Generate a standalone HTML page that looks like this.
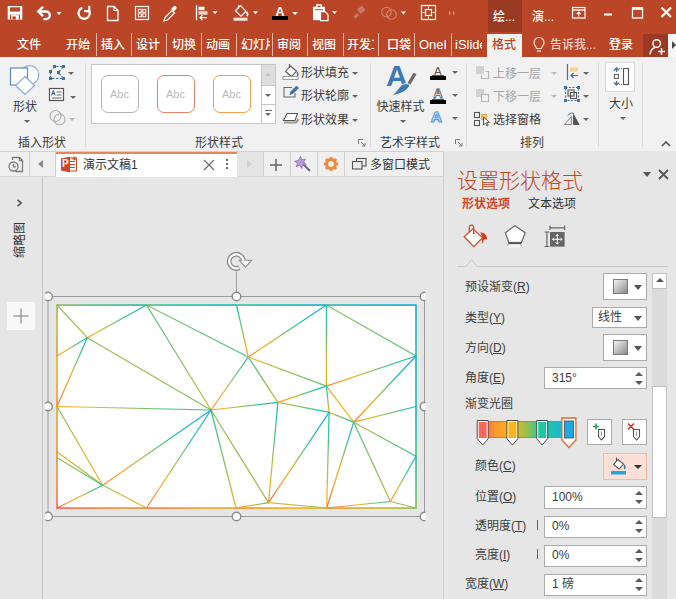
<!DOCTYPE html>
<html lang="zh-CN">
<head>
<meta charset="utf-8">
<title>演示文稿1 - PowerPoint</title>
<style>
*{box-sizing:border-box;margin:0;padding:0}
html,body{width:676px;height:599px;overflow:hidden;background:#e6e6e6}
body{position:relative;font-family:"Liberation Sans","Noto Sans CJK SC",sans-serif;font-size:12px;color:#444;line-height:16px}
.a{position:absolute}
.t{position:absolute;white-space:nowrap;line-height:16px;height:16px}
svg{position:absolute;overflow:visible}
#title{left:0;top:0;width:676px;height:33px;background:#ba4627}
#tabs{left:0;top:32px;width:676px;height:25px;background:#ba4627}
#tabs .t{color:#fff;font-size:12px;top:5px;font-weight:500}
#tabs .s{position:absolute;top:1px;width:1px;height:23px;background:#e9b5a6}
#ribbon{left:0;top:57px;width:676px;height:95px;background:#f1f1f1;border-bottom:1px solid #d2d2d2}
#ribbon .gs{position:absolute;top:6px;width:1px;height:84px;background:#dcdcdc}
#ribbon .gl{color:#606060;top:77.5px}
#ribbon .t{color:#3b3b3b}
#ribbon .dis{color:#a6a6a6}
.dd{position:absolute;width:0;height:0;border-left:3px solid transparent;border-right:3px solid transparent;border-top:3px solid #666}
.ddw{position:absolute;width:0;height:0;border-left:3px solid transparent;border-right:3px solid transparent;border-top:3px solid #fff}
#docbar{left:0;top:152px;width:443px;height:25px;background:#f0f0f0;border-bottom:1px solid #d4d4d4}
#docbar .s{position:absolute;top:0;width:1px;height:24px;background:#d2d2d2}
#left{left:0;top:177px;width:43px;height:422px;background:#e6e6e6;border-right:1px solid #c3c3c3}
#panel{left:443px;top:151px;width:233px;height:448px;background:#e6e6e6;border-left:1px solid #cfcfcf}
#panel .t{color:#3d3d3d}
.box{position:absolute;background:#fff;border:1px solid #ababab}
.spu{position:absolute;width:0;height:0;border-left:4px solid transparent;border-right:4px solid transparent;border-bottom:4.5px solid #5a5a5a;margin-left:-0.5px}
.spd{position:absolute;width:0;height:0;border-left:4px solid transparent;border-right:4px solid transparent;border-top:4.5px solid #5a5a5a;margin-left:-0.5px}
u{text-decoration:underline;text-underline-offset:1px}
</style>
</head>
<body>
<!--TITLE-->
<div id="title" class="a">
<div class="a" style="left:488px;top:0;width:34px;height:33px;background:#9b3a22"></div>
<svg width="676" height="33" viewBox="0 0 676 33" style="left:0;top:0" fill="none" stroke="#fff" stroke-width="1.3">
<!-- save -->
<rect x="7.700" y="6" width="14.600" height="13.600" fill="#fff" stroke="none"/><rect x="10" y="7.300" width="10" height="4.300" fill="#ba4627" stroke="none"/><rect x="10" y="14.600" width="10" height="5" fill="#ba4627" stroke="none"/><rect x="11.200" y="14.600" width="7.600" height="5" fill="#fff" stroke="none"/><rect x="12.400" y="16.400" width="3.400" height="3.200" fill="#ba4627" stroke="none"/>
<!-- undo -->
<path d="M39.500 11.500h6.500a3.800 3.800 0 0 1 0 7.600h-2.500" stroke-width="2.400"/><path d="M43 6.800l-4.700 4.700 4.700 4.700" stroke-width="2.400"/>
<path d="M56.500 12l2.500 3 2.500-3z" fill="#fff" stroke="none"/>
<!-- redo (repeat) -->
<path d="M89.300 11A5.600 5.600 0 1 1 82.300 7.900" stroke-width="2.200"/><path d="M89.300 5.800V11.200H84.200" stroke-width="2.200"/>
<!-- new doc -->
<path d="M107.500 6.500h6.500l4 4v10h-10.500z" stroke-width="1.300"/><path d="M114 6.500v4h4" stroke-width="1.100"/>
<!-- grid -->
<rect x="135.500" y="6.500" width="13" height="13" stroke-width="1.200"/><rect x="138.300" y="9.300" width="3" height="3" stroke-width="1"/><rect x="142.800" y="9.300" width="3" height="3" stroke-width="1"/><rect x="138.300" y="13.800" width="3" height="3" stroke-width="1"/><rect x="142.800" y="13.800" width="3" height="3" stroke-width="1"/>
<!-- eyedropper -->
<path d="M164 21l1-3.500 7-7 2.500 2.500-7 7z" stroke-width="1.200"/><path d="M171 9l2.500-2.500a1.800 1.800 0 0 1 2.600 2.600l-2.500 2.500z" fill="#fff" stroke="none"/>
<g transform="translate(0,-0.8)">
<!-- align -->
<path d="M196.500 6v15" stroke-width="1.300"/><rect x="198.500" y="7.500" width="6" height="3.500" fill="#fff" stroke="none"/><rect x="198.500" y="12" width="9" height="3.500" fill="#f3d6cd" stroke="none"/><path d="M207 18.500h-7m2.500-2.500l-2.500 2.500 2.500 2.500" stroke-width="1.200"/>
<path d="M212.500 12l2.500 3 2.500-3z" fill="#fff" stroke="none"/>
<!-- fill bucket -->
<path d="M235.500 11.500l5-5 5.500 5.500-5 5z" stroke-width="1.200"/><path d="M238.500 9.500v-3.500" stroke-width="1.200"/><path d="M246.500 12.500c1.500 2 1.500 3.500 0.500 4.500" stroke-width="1.500"/><rect x="233.500" y="18.500" width="14" height="3" fill="#f6e6da" stroke="none"/>
<path d="M253 12l2.500 3 2.500-3z" fill="#fff" stroke="none"/>
<!-- paste -->
<rect x="313" y="7.500" width="12" height="13.500" fill="#fff" stroke="none"/><rect x="316" y="5" width="6" height="4" fill="#fff" stroke="none"/><rect x="317.500" y="6.500" width="3" height="1.500" fill="#ba4627" stroke="none"/><path d="M315 10.500h8" stroke="#ba4627" stroke-width="1"/><path d="M320.500 12.500h4.500l3 3v6h-7.500z" fill="#ba4627" stroke="#fff" stroke-width="1.200"/>
<path d="M332 12l2.500 3 2.500-3z" fill="#fff" stroke="none"/>
</g>
<!-- format painter (dim) -->
<g stroke="#c77a66" fill="#c77a66"><path d="M357 9.500l5-4 3.500 4.500-5 4z" stroke="none"/><path d="M358 14.500l-3.500 3" stroke-width="3"/></g>
<!-- combine shapes (dim) -->
<circle cx="386.500" cy="12" r="4.800" stroke="#cf8a78" stroke-width="1.100"/><circle cx="391.500" cy="14.500" r="4.800" stroke="#cf8a78" stroke-width="1.100"/>
<path d="M401 11.500l2.500 3 2.500-3z" fill="#fff" stroke="none"/>
<!-- fit -->
<rect x="421.500" y="5.500" width="14" height="14" stroke-width="1.200"/><rect x="425.500" y="9.500" width="6" height="6" stroke-width="1.200"/><path d="M428.500 6.500v2m0 8v2m-6-6h2m8 0h2" stroke-width="1"/>
<!-- chevrons dim -->
<path d="M449 10.500l2 2.500-2 2.500zM453 10.500l2 2.500-2 2.500z" fill="#cf8a78" stroke="none"/>
<!-- ribbon display -->
<rect x="572.500" y="7.500" width="12.500" height="10.500" stroke-width="1.200"/><path d="M572.500 10h12.500" stroke-width="1.400"/><path d="M578.700 16.500v-4.500m-2 2l2-2 2 2" stroke-width="1.100"/>
<!-- minimize -->
<path d="M604 14.500h8" stroke-width="2"/>
<!-- maximize -->
<rect x="632.500" y="8" width="10" height="10" stroke-width="1.300"/><path d="M632 8.500h11" stroke-width="2.600"/>
<!-- close -->
<path d="M661.500 7.500l9.500 9.500m0-9.500l-9.500 9.500" stroke-width="2.200"/>
</svg>
<!-- font color A -->
<div class="t" style="left:275.500px;top:3.500px;color:#fff;font-weight:bold;font-size:12.500px">A</div>
<div class="a" style="left:272px;top:16px;width:16px;height:4px;background:#000"></div>
<div class="ddw" style="left:292px;top:12px"></div>
<div class="t" style="left:493px;top:9px;color:#fff;font-size:12px;font-weight:500">绘...</div>
<div class="t" style="left:532px;top:9px;color:#fff;font-size:12px;font-weight:500">演...</div>
</div>
<!--TABS-->
<div id="tabs" class="a">
<div class="t" style="left:17px">文件</div>
<div class="t" style="left:66px">开始</div><div class="s" style="left:96px"></div>
<div class="t" style="left:101px">插入</div><div class="s" style="left:131px"></div>
<div class="t" style="left:136px">设计</div><div class="s" style="left:166px"></div>
<div class="t" style="left:172px">切换</div><div class="s" style="left:201px"></div>
<div class="t" style="left:206px">动画</div><div class="s" style="left:236px"></div>
<div class="t" style="left:241px;width:29px;overflow:hidden">幻灯片放映</div><div class="s" style="left:272px"></div>
<div class="t" style="left:277px">审阅</div><div class="s" style="left:307px"></div>
<div class="t" style="left:312px">视图</div><div class="s" style="left:343px"></div>
<div class="t" style="left:347px;width:27px;overflow:hidden">开发工具</div><div class="s" style="left:378px"></div>
<div class="t" style="left:387px">口袋</div><div class="s" style="left:414px"></div>
<div class="t" style="left:419px;width:27px;overflow:hidden;font-size:13px">OneKey</div><div class="s" style="left:451px"></div>
<div class="t" style="left:455px;width:27px;overflow:hidden;font-size:13px">iSlide</div>
<div class="a" style="left:487px;top:2px;width:35px;height:23px;background:#f1f1f1"></div>
<div class="t" style="left:492px;color:#ba4627">格式</div>
<svg width="14" height="18" viewBox="0 0 14 18" style="left:532px;top:4px" fill="none" stroke="#f6d5cb" stroke-width="1.200"><path d="M4.500 12.500c0-2-2.500-3-2.500-6a5 5 0 0 1 10 0c0 3-2.500 4-2.500 6z"/><path d="M5 15h4" stroke-width="1.400"/></svg>
<div class="t" style="left:550px;color:#f3cdc2">告诉我...</div>
<div class="t" style="left:609px">登录</div>
<div class="a" style="left:643px;top:2px;width:25px;height:23px;background:#9b3a22"></div>
<svg width="22" height="20" viewBox="0 0 22 20" style="left:646px;top:4.500px" fill="none" stroke="#fff" stroke-width="1.400"><circle cx="10.700" cy="6.500" r="3.800"/><path d="M4 17.500c0.500-3.800 2.500-6.300 5-7"/><path d="M12 14.500h7m-3.500-3.500v7" stroke-width="1.500"/></svg>
<div class="a" style="left:668px;top:2px;width:8px;height:23px;background:#f6f6f6"></div>
<div class="a" style="left:672px;top:9px;width:0;height:0;border-top:4px solid transparent;border-bottom:4px solid transparent;border-left:4px solid #444"></div>
</div>
<!--RIBBON-->
<div id="ribbon" class="a">
<!-- group 1: insert shapes (coords relative to ribbon top=57) -->
<svg width="34" height="34" viewBox="0 0 34 34" style="left:8px;top:6px" fill="#fff" stroke="#4a7ab5" stroke-width="1.200">
<circle cx="21.500" cy="12" r="9.300" stroke="#8fb0dc"/><rect x="2.500" y="5" width="17" height="17" stroke="#5b87c5"/><path d="M17 13.500l9.500 9-9.500 9-9.500-9z" stroke="#8fa9cf"/></svg>
<div class="t" style="left:13px;top:41.500px;font-size:12px">形状</div>
<div class="dd" style="left:23.500px;top:62.500px"></div>
<svg width="20" height="18" viewBox="0 0 20 18" style="left:48px;top:7px" fill="none" stroke="#41719c" stroke-width="1.200"><path d="M2.500 7.500l4-5h9l-5 6 5 6h-13z" stroke-dasharray="2.500 1.500"/><g fill="#41719c" stroke="none"><rect x="1" y="6" width="3" height="3"/><rect x="5" y="1" width="3" height="3"/><rect x="14" y="1" width="3" height="3"/><rect x="9" y="7" width="3" height="3"/><rect x="14" y="13" width="3" height="3"/><rect x="1" y="13" width="3" height="3"/></g></svg>
<div class="dd" style="left:68px;top:15px"></div>
<svg width="18" height="16" viewBox="0 0 18 16" style="left:48px;top:30px" fill="none" stroke="#555" stroke-width="1.200"><rect x="1.500" y="1.500" width="14" height="12" fill="#fff"/><path d="M8.500 5h5M8.500 8h5M4 11h9.500" stroke="#666"/><path d="M3.500 8.500l1.800-5 1.800 5m-3-1.800h2.400" stroke="#2b579a" stroke-width="1"/></svg>
<div class="dd" style="left:70px;top:39px"></div>
<svg width="20" height="18" viewBox="0 0 20 18" style="left:48px;top:52px" fill="none" stroke="#b0b0b0" stroke-width="1.200"><circle cx="7.500" cy="7" r="5.500"/><circle cx="11.500" cy="10.500" r="5.500"/></svg>
<div class="dd" style="left:69px;top:61px;border-top-color:#b8b8b8"></div>
<div class="t gl" style="left:18px">插入形状</div>
<div class="gs" style="left:85px"></div>
<!-- group 2: gallery -->
<div class="a" style="left:91px;top:7px;width:185px;height:60px;background:#fff;border:1px solid #c6c6c6"></div>
<div class="a" style="left:101px;top:18px;width:38px;height:38px;border:1px solid #b4b4b4;border-radius:7px;background:#fff"></div>
<div class="a" style="left:157px;top:18px;width:38px;height:38px;border:1px solid #e8806a;border-radius:7px;background:#fff"></div>
<div class="a" style="left:213px;top:18px;width:38px;height:38px;border:1px solid #f0a04a;border-radius:7px;background:#fff"></div>
<div class="t" style="left:110px;top:29px;font-size:11px;color:#b9b9b9">Abc</div>
<div class="t" style="left:166px;top:29px;font-size:11px;color:#b9b9b9">Abc</div>
<div class="t" style="left:222px;top:29px;font-size:11px;color:#b9b9b9">Abc</div>
<div class="a" style="left:261px;top:7px;width:15px;height:22px;background:#dedede;border:1px solid #c6c6c6"></div>
<div class="a" style="left:261px;top:28px;width:15px;height:20px;background:#fff;border:1px solid #c6c6c6"></div>
<div class="a" style="left:261px;top:47px;width:15px;height:20px;background:#fff;border:1px solid #c6c6c6"></div>
<div class="spu" style="left:265px;top:16px;border-bottom-color:#bdbdbd;border-left-width:3px;border-right-width:3px;border-bottom-width:3px"></div>
<div class="dd" style="left:265px;top:37px"></div>
<div class="a" style="left:265px;top:53px;width:7px;height:1px;background:#666"></div>
<div class="dd" style="left:265px;top:56px"></div>
<!-- fill / outline / effects -->
<svg width="18" height="18" viewBox="0 0 18 18" style="left:282px;top:6px" fill="none" stroke="#555" stroke-width="1.100"><path d="M3.500 8.500l5-5.500 6 5-5 5.500z" fill="#fff"/><path d="M7.500 5v-4" /><path d="M15 9c1.200 1.800 1.200 3 0.300 4" stroke="#41719c" stroke-width="1.400"/><rect x="1" y="13.500" width="15" height="3" fill="#fff" stroke="#888" stroke-width="0.800"/></svg>
<div class="t" style="left:301px;top:8px">形状填充</div><div class="dd" style="left:352px;top:15px"></div>
<svg width="18" height="18" viewBox="0 0 18 18" style="left:282px;top:27px" fill="none" stroke="#6a6a6a" stroke-width="1.100"><path d="M10 3.500h-8v9.500h11v-4"/><path d="M8 10.500l1-3 5.500-5.500 2 2-5.500 5.500z" fill="#41719c" stroke="#41719c" stroke-width="0.800"/></svg>
<div class="t" style="left:301px;top:31px">形状轮廓</div><div class="dd" style="left:352px;top:38px"></div>
<svg width="18" height="16" viewBox="0 0 18 16" style="left:282px;top:53px" fill="none" stroke="#555" stroke-width="1.100"><path d="M2 12.500l12 0 2.500-3.500" stroke="#9a9a9a" stroke-width="2.200"/><path d="M1.500 10.500l3.500-7h10.500l-2.500 7z" fill="#fff"/></svg>
<div class="t" style="left:301px;top:54.500px">形状效果</div><div class="dd" style="left:352px;top:62px"></div>
<div class="t gl" style="left:195px">形状样式</div>
<svg width="8" height="8" viewBox="0 0 8 8" style="left:358px;top:82px" fill="none" stroke="#777" stroke-width="1"><path d="M0.500 5v-4.500h4.500"/><path d="M3 3l4 4m0-3v3h-3"/></svg>
<div class="gs" style="left:370px"></div>
<!-- group 3: wordart -->
<div class="t" style="left:386px;top:4px;font-size:30px;font-weight:bold;color:#3e7bb6;line-height:30px;height:30px">A</div>
<svg width="28" height="26" viewBox="0 0 28 26" style="left:390px;top:13px" fill="none"><path d="M25 3.500L18.800 14" stroke="#6a6a6a" stroke-width="3.400"/><path d="M20 14.500c-1 4.500-7.500 10-18.500 11 3.500-2.300 5.800-5.200 7.800-8.200 2-3 6.700-4.800 10.700-2.800z" fill="#3e7bb6" stroke="#f1f1f1" stroke-width="1"/></svg>
<div class="t" style="left:376.500px;top:42px;font-size:12px">快速样式</div>
<div class="dd" style="left:399.500px;top:62.500px"></div>
<div class="t" style="left:434px;top:6px;font-size:11.500px;color:#555">A</div><div class="a" style="left:430px;top:19px;width:16px;height:3.500px;background:#000"></div><div class="a" style="left:432px;top:18px;width:12px;height:1px;background:#555"></div><div class="dd" style="left:452px;top:14px"></div>
<svg width="16" height="14" viewBox="0 0 16 14" style="left:430px;top:28px"><text x="8" y="12.500" text-anchor="middle" font-family="Liberation Sans, sans-serif" font-size="13" font-weight="bold" fill="#fff" stroke="#555" stroke-width="0.800">A</text></svg><div class="a" style="left:430px;top:43px;width:16px;height:3.500px;background:#000"></div><div class="a" style="left:432px;top:41.500px;width:12px;height:1px;background:#555"></div><div class="dd" style="left:452px;top:37px"></div>
<div class="t" style="left:431px;top:52px;font-size:15px;font-weight:bold;color:#fff;-webkit-text-stroke:1.200px #5b9bd5;text-shadow:0 0 2px #9cc2e6">A</div><div class="dd" style="left:452px;top:60px"></div>
<div class="t gl" style="left:380px">艺术字样式</div>
<svg width="8" height="8" viewBox="0 0 8 8" style="left:455px;top:82px" fill="none" stroke="#777" stroke-width="1"><path d="M0.500 5v-4.500h4.500"/><path d="M3 3l4 4m0-3v3h-3"/></svg>
<div class="gs" style="left:466px"></div>
<!-- group 4: arrange -->
<svg width="16" height="16" viewBox="0 0 16 16" style="left:475px;top:7.500px" fill="none" stroke="#b5b5b5" stroke-width="1.100"><rect x="1" y="1" width="8" height="8" fill="#d2d2d2" stroke="none"/><path d="M10.500 6.500h3v7h-7v-3"/></svg>
<div class="t dis" style="left:493px;top:8.500px">上移一层</div><div class="dd" style="left:551px;top:15px;border-top-color:#bbb"></div>
<svg width="16" height="16" viewBox="0 0 16 16" style="left:475px;top:30.500px" fill="none" stroke="#b5b5b5" stroke-width="1.100"><rect x="1" y="1" width="8" height="8" fill="#d2d2d2" stroke="none"/><rect x="6.500" y="6.500" width="7" height="7" fill="#f1f1f1"/></svg>
<div class="t dis" style="left:493px;top:31.500px">下移一层</div><div class="dd" style="left:551px;top:38px;border-top-color:#bbb"></div>
<svg width="18" height="18" viewBox="0 0 18 18" style="left:473px;top:53px" fill="none" stroke="#555" stroke-width="1.100"><rect x="1.500" y="2.500" width="5" height="5"/><rect x="1.500" y="10.500" width="5" height="5"/><rect x="8.500" y="4.500" width="5" height="5" fill="#f5c77e" stroke="#e8a94a"/><path d="M10.500 7v8l2-2 1.500 3 1.200-0.600-1.500-3h2.800z" fill="#fff" stroke="#444" stroke-width="0.900"/></svg>
<div class="t" style="left:493px;top:54.500px">选择窗格</div>
<svg width="16" height="18" viewBox="0 0 16 18" style="left:565px;top:6px" fill="none" stroke="#41719c" stroke-width="1.200"><path d="M2.500 1v16"/><rect x="5" y="4.500" width="8" height="4" fill="#f5d48a" stroke="none"/><path d="M13 12.500h-7m2.500-2.500l-2.500 2.500 2.500 2.500"/></svg>
<div class="dd" style="left:583px;top:15px"></div>
<svg width="18" height="18" viewBox="0 0 18 18" style="left:563px;top:28px" fill="none" stroke="#555" stroke-width="1.100"><path d="M2.500 2.500h13v13h-13z" stroke-dasharray="2 1.500" stroke="#41719c"/><rect x="5" y="5" width="6" height="6"/><rect x="7.500" y="7.500" width="6" height="6"/><g fill="#41719c" stroke="none"><rect x="1" y="1" width="3" height="3"/><rect x="14" y="1" width="3" height="3"/><rect x="1" y="14" width="3" height="3"/><rect x="14" y="14" width="3" height="3"/></g></svg>
<div class="dd" style="left:583px;top:38px"></div>
<svg width="18" height="16" viewBox="0 0 18 16" style="left:563px;top:53.500px" fill="none" stroke="#888" stroke-width="1"><path d="M8.500 13.500h-7l7-8z" fill="#f1f1f1"/><path d="M10.500 13.500h5.500l-5.500-10z" fill="#555" stroke="#555"/><path d="M5 4.500c1.500-2.500 4-3 6-2" stroke="#41719c"/></svg>
<div class="dd" style="left:583px;top:61px"></div>
<div class="t gl" style="left:520px">排列</div>
<div class="gs" style="left:598px"></div>
<!-- group 5: size -->
<div class="a" style="left:605px;top:5px;width:30px;height:30px;background:#fdfdfd;border:1px solid #d9d9d9"></div>
<svg width="22" height="22" viewBox="0 0 22 22" style="left:611px;top:9px" fill="none" stroke="#555" stroke-width="1.100"><rect x="12.500" y="2.500" width="5" height="16"/><path d="M5.500 2v4m-2.500-1.500l2.500-2.500 2.500 2.500M5.500 19v-4m-2.500 1.500l2.500 2.500 2.500-2.500" stroke="#41719c" stroke-width="1.300"/><rect x="3.500" y="8.500" width="4" height="4" stroke="#666"/><path d="M8 2.500h4M8 18.500h4" stroke-dasharray="1 1" stroke="#777"/></svg>
<div class="t" style="left:609px;top:39px;font-size:12px">大小</div>
<div class="dd" style="left:619.500px;top:60px"></div>
<div class="gs" style="left:642px"></div>
<svg width="10" height="7" viewBox="0 0 10 7" style="left:661px;top:83px" fill="none" stroke="#555" stroke-width="1.600"><path d="M1 6l4-4 4 4"/></svg>
</div>
<!--DOCBAR-->
<div id="docbar" class="a">
<div class="s" style="left:29px"></div><div class="s" style="left:55px"></div>
<svg width="16" height="18" viewBox="0 0 16 18" style="left:8px;top:3.500px" fill="none" stroke="#7d7d7d" stroke-width="1.300"><path d="M4.500 4v-2.500h7l3 3v11h-7"/><path d="M11.500 1.500v3h3"/><circle cx="5.500" cy="10.500" r="4.500" fill="#ececec"/><path d="M5.500 8v2.800h2.300"/></svg>
<div class="a" style="left:38px;top:8px;width:0;height:0;border-top:4px solid transparent;border-bottom:4px solid transparent;border-right:5px solid #8a8a8a"></div>
<div class="a" style="left:56px;top:0;width:181px;height:25px;background:#fff;border-top:2px solid #e9865a"></div>
<svg width="18" height="17" viewBox="0 0 18 17" style="left:60px;top:4px"><rect x="7" y="2" width="9.500" height="13" fill="#fff" stroke="#d24726" stroke-width="1"/><path d="M10 5.500h5M10 8.500h5M10 11.500h5" stroke="#d24726" stroke-width="1.200"/><path d="M1 2.500l9-1.800v15.600l-9-1.800z" fill="#d24726"/><circle cx="14.500" cy="2.500" r="2" fill="#e8613a"/></svg>
<div class="t" style="left:62px;top:5px;font-size:10px;font-weight:bold;color:#fff;line-height:14px;height:14px">P</div>
<div class="t" style="left:83px;top:5px;font-size:12px;color:#333">演示文稿1</div>
<svg width="12" height="12" viewBox="0 0 12 12" style="left:203px;top:7px" fill="none" stroke="#666" stroke-width="1.100"><path d="M1 1l10 10m0-10l-10 10"/></svg>
<div class="a" style="left:226px;top:7px;width:2px;height:2px;background:#666;box-shadow:0 4px 0 #666,0 8px 0 #666"></div>
<div class="a" style="left:237px;top:0;width:26px;height:24px;background:#e4e4e4"></div><div class="a" style="left:247px;top:8px;width:0;height:0;border-top:4px solid transparent;border-bottom:4px solid transparent;border-left:5px solid #cfcfcf"></div>
<div class="s" style="left:263px"></div>
<svg width="14" height="14" viewBox="0 0 14 14" style="left:269px;top:6px" fill="none" stroke="#666" stroke-width="1.500"><path d="M7 1v12M1 7h12"/></svg>
<div class="s" style="left:290px"></div>
<svg width="18" height="18" viewBox="0 0 18 18" style="left:294px;top:3px" fill="none"><path d="M8.500 8.500l7.500 7.500" stroke="#666" stroke-width="1.800"/><path d="M6.500 1.500l1.500 3.200 3.500-0.700-1.700 3 2.500 2.600-3.600 0.200-0.900 3.500-2.200-2.800-3.400 1.200 1.300-3.300-2.800-2.200 3.500-0.700z" fill="#b79ad6" stroke="#8f6fb8" stroke-width="0.800"/></svg>
<div class="s" style="left:317px"></div>
<svg width="16" height="16" viewBox="0 0 18 18" style="left:323px;top:4px" fill="none"><circle cx="9" cy="9" r="5" stroke="#ee8a3c" stroke-width="3.400"/><g stroke="#ee8a3c" stroke-width="3.200"><path d="M9 1v2.500M9 14.500v2.500M1 9h2.500M14.500 9h2.500M3.300 3.300l1.800 1.800M12.900 12.900l1.800 1.800M3.300 14.700l1.800-1.800M12.900 5.100l1.800-1.800"/></g></svg>
<div class="s" style="left:344px"></div>
<svg width="15" height="12" viewBox="0 0 15 12" style="left:352px;top:6px" fill="#ececec" stroke="#555" stroke-width="1.100"><rect x="4.500" y="0.500" width="9.500" height="7.500"/><rect x="0.500" y="3.500" width="9.500" height="7.500"/></svg>
<div class="t" style="left:370px;top:5px;font-size:12px;color:#333">多窗口模式</div>
</div>
<!--LEFT-->
<div id="left" class="a">
<svg width="8" height="8" viewBox="0 0 8 8" style="left:16px;top:22px" fill="none" stroke="#555" stroke-width="1.600"><path d="M1.500 0.800l3.700 3.200-3.700 3.200"/></svg>
<div class="t" style="left:2px;top:55px;width:36px;font-size:12px;color:#333;transform:rotate(-90deg);transform-origin:18px 8px;text-align:center">缩略图</div>
<div class="a" style="left:7px;top:125px;width:28px;height:28px;background:#f8f8f8"></div>
<svg width="16" height="16" viewBox="0 0 16 16" style="left:13px;top:131px" fill="none" stroke="#777" stroke-width="1"><path d="M8 0.500v15M0.500 8h15"/></svg>
</div>
<!--CANVAS-->
<svg width="676" height="599" viewBox="0 0 676 599" style="left:0;top:0" fill="none">
<defs>
<linearGradient id="g0" gradientUnits="userSpaceOnUse" x1="146.5" y1="305" x2="57" y2="305"><stop offset="0" stop-color="#1aa9e6"/><stop offset="0.167" stop-color="#1bb1d5"/><stop offset="0.333" stop-color="#1cb9c4"/><stop offset="0.5" stop-color="#1dc1b3"/><stop offset="0.667" stop-color="#26c7a0"/><stop offset="0.833" stop-color="#5bc27f"/><stop offset="1" stop-color="#90be5e"/></linearGradient>
<linearGradient id="g1" gradientUnits="userSpaceOnUse" x1="146.5" y1="305" x2="87.3" y2="337.7"><stop offset="0" stop-color="#1cb6cc"/><stop offset="0.167" stop-color="#1dc0b7"/><stop offset="0.333" stop-color="#27c79f"/><stop offset="0.5" stop-color="#68c177"/><stop offset="0.667" stop-color="#a8bb4e"/><stop offset="0.833" stop-color="#e9b625"/><stop offset="1" stop-color="#faa328"/></linearGradient>
<linearGradient id="g2" gradientUnits="userSpaceOnUse" x1="87.3" y1="337.7" x2="57" y2="305"><stop offset="0" stop-color="#bfb93f"/><stop offset="0.167" stop-color="#b7ba44"/><stop offset="0.333" stop-color="#b0bb49"/><stop offset="0.5" stop-color="#a8bc4e"/><stop offset="0.667" stop-color="#a0bc53"/><stop offset="0.833" stop-color="#98bd59"/><stop offset="1" stop-color="#90be5e"/></linearGradient>
<linearGradient id="g3" gradientUnits="userSpaceOnUse" x1="87.3" y1="337.7" x2="57" y2="356"><stop offset="0" stop-color="#1cb9c5"/><stop offset="0.167" stop-color="#1dc3af"/><stop offset="0.333" stop-color="#43c58e"/><stop offset="0.5" stop-color="#88be62"/><stop offset="0.667" stop-color="#cdb837"/><stop offset="0.833" stop-color="#fbac21"/><stop offset="1" stop-color="#fa9336"/></linearGradient>
<linearGradient id="g4" gradientUnits="userSpaceOnUse" x1="57" y1="356" x2="57" y2="305"><stop offset="0" stop-color="#f8695a"/><stop offset="0.167" stop-color="#f97c4a"/><stop offset="0.333" stop-color="#fa8f3a"/><stop offset="0.5" stop-color="#faa22a"/><stop offset="0.667" stop-color="#f9b41b"/><stop offset="0.833" stop-color="#c4b93c"/><stop offset="1" stop-color="#90be5e"/></linearGradient>
<linearGradient id="g5" gradientUnits="userSpaceOnUse" x1="146.5" y1="305" x2="211" y2="410"><stop offset="0" stop-color="#44c58d"/><stop offset="0.167" stop-color="#5ac37f"/><stop offset="0.333" stop-color="#71c171"/><stop offset="0.5" stop-color="#87bf63"/><stop offset="0.667" stop-color="#9dbd55"/><stop offset="0.833" stop-color="#b3ba47"/><stop offset="1" stop-color="#c9b839"/></linearGradient>
<linearGradient id="g6" gradientUnits="userSpaceOnUse" x1="87.3" y1="337.7" x2="211" y2="410"><stop offset="0" stop-color="#a2bc52"/><stop offset="0.167" stop-color="#9fbc54"/><stop offset="0.333" stop-color="#9cbd56"/><stop offset="0.5" stop-color="#99bd58"/><stop offset="0.667" stop-color="#96bd5a"/><stop offset="0.833" stop-color="#93bd5c"/><stop offset="1" stop-color="#90be5e"/></linearGradient>
<linearGradient id="g7" gradientUnits="userSpaceOnUse" x1="57" y1="406.5" x2="211" y2="410"><stop offset="0" stop-color="#faa527"/><stop offset="0.167" stop-color="#f4b51f"/><stop offset="0.333" stop-color="#c2b93e"/><stop offset="0.5" stop-color="#8fbe5e"/><stop offset="0.667" stop-color="#5dc27d"/><stop offset="0.833" stop-color="#2bc79d"/><stop offset="1" stop-color="#1dc2b1"/></linearGradient>
<linearGradient id="g8" gradientUnits="userSpaceOnUse" x1="87.3" y1="337.7" x2="57" y2="406.5"><stop offset="0" stop-color="#1dbcbd"/><stop offset="0.167" stop-color="#26c7a0"/><stop offset="0.333" stop-color="#78c06c"/><stop offset="0.5" stop-color="#cbb838"/><stop offset="0.667" stop-color="#faa725"/><stop offset="0.833" stop-color="#f98a3e"/><stop offset="1" stop-color="#f86c58"/></linearGradient>
<linearGradient id="g9" gradientUnits="userSpaceOnUse" x1="57" y1="356" x2="57" y2="406.5"><stop offset="0" stop-color="#e4b629"/><stop offset="0.167" stop-color="#fbaf1f"/><stop offset="0.333" stop-color="#faa12b"/><stop offset="0.5" stop-color="#fa9336"/><stop offset="0.667" stop-color="#f98542"/><stop offset="0.833" stop-color="#f9774e"/><stop offset="1" stop-color="#f8695a"/></linearGradient>
<linearGradient id="g10" gradientUnits="userSpaceOnUse" x1="146.5" y1="305" x2="248.3" y2="357"><stop offset="0" stop-color="#90be5e"/><stop offset="0.167" stop-color="#82bf66"/><stop offset="0.333" stop-color="#75c06e"/><stop offset="0.5" stop-color="#68c177"/><stop offset="0.667" stop-color="#5bc37f"/><stop offset="0.833" stop-color="#4dc487"/><stop offset="1" stop-color="#40c590"/></linearGradient>
<linearGradient id="g11" gradientUnits="userSpaceOnUse" x1="211" y1="410" x2="248.3" y2="357"><stop offset="0" stop-color="#f98d3b"/><stop offset="0.167" stop-color="#faa428"/><stop offset="0.333" stop-color="#e8b626"/><stop offset="0.5" stop-color="#a8bc4e"/><stop offset="0.667" stop-color="#68c177"/><stop offset="0.833" stop-color="#28c79f"/><stop offset="1" stop-color="#1dc0b6"/></linearGradient>
<linearGradient id="g12" gradientUnits="userSpaceOnUse" x1="248.3" y1="357" x2="277.9" y2="402.4"><stop offset="0" stop-color="#38c695"/><stop offset="0.167" stop-color="#53c384"/><stop offset="0.333" stop-color="#6ec173"/><stop offset="0.5" stop-color="#89be61"/><stop offset="0.667" stop-color="#a5bc50"/><stop offset="0.833" stop-color="#c0b93f"/><stop offset="1" stop-color="#dbb72e"/></linearGradient>
<linearGradient id="g13" gradientUnits="userSpaceOnUse" x1="211" y1="410" x2="277.9" y2="402.4"><stop offset="0" stop-color="#fa9e2d"/><stop offset="0.167" stop-color="#fbb31b"/><stop offset="0.333" stop-color="#c5b93c"/><stop offset="0.5" stop-color="#8abe61"/><stop offset="0.667" stop-color="#50c386"/><stop offset="0.833" stop-color="#1ec7a8"/><stop offset="1" stop-color="#1dbebb"/></linearGradient>
<linearGradient id="g14" gradientUnits="userSpaceOnUse" x1="277.9" y1="402.4" x2="268.5" y2="502.7"><stop offset="0" stop-color="#1dbdbb"/><stop offset="0.167" stop-color="#1ec7a8"/><stop offset="0.333" stop-color="#52c384"/><stop offset="0.5" stop-color="#8fbe5e"/><stop offset="0.667" stop-color="#cbb838"/><stop offset="0.833" stop-color="#fbb01e"/><stop offset="1" stop-color="#fa9a30"/></linearGradient>
<linearGradient id="g15" gradientUnits="userSpaceOnUse" x1="211" y1="410" x2="268.5" y2="502.7"><stop offset="0" stop-color="#9cbd56"/><stop offset="0.167" stop-color="#9cbd56"/><stop offset="0.333" stop-color="#9cbd56"/><stop offset="0.5" stop-color="#9cbd55"/><stop offset="0.667" stop-color="#9dbd55"/><stop offset="0.833" stop-color="#9dbd55"/><stop offset="1" stop-color="#9dbc55"/></linearGradient>
<linearGradient id="g16" gradientUnits="userSpaceOnUse" x1="236" y1="508" x2="268.5" y2="502.7"><stop offset="0" stop-color="#f98245"/><stop offset="0.167" stop-color="#fa9435"/><stop offset="0.333" stop-color="#faa725"/><stop offset="0.5" stop-color="#ebb524"/><stop offset="0.667" stop-color="#b7ba45"/><stop offset="0.833" stop-color="#83bf66"/><stop offset="1" stop-color="#4fc486"/></linearGradient>
<linearGradient id="g17" gradientUnits="userSpaceOnUse" x1="211" y1="410" x2="236" y2="508"><stop offset="0" stop-color="#1ec8a5"/><stop offset="0.167" stop-color="#40c590"/><stop offset="0.333" stop-color="#62c27b"/><stop offset="0.5" stop-color="#83bf65"/><stop offset="0.667" stop-color="#a5bc50"/><stop offset="0.833" stop-color="#c7b93b"/><stop offset="1" stop-color="#e9b625"/></linearGradient>
<linearGradient id="g18" gradientUnits="userSpaceOnUse" x1="146.5" y1="508" x2="236" y2="508"><stop offset="0" stop-color="#f8695a"/><stop offset="0.167" stop-color="#f97c4a"/><stop offset="0.333" stop-color="#fa8f3a"/><stop offset="0.5" stop-color="#faa22a"/><stop offset="0.667" stop-color="#f9b41b"/><stop offset="0.833" stop-color="#c4b93c"/><stop offset="1" stop-color="#90be5e"/></linearGradient>
<linearGradient id="g19" gradientUnits="userSpaceOnUse" x1="211" y1="410" x2="146.5" y2="508"><stop offset="0" stop-color="#1bb0d8"/><stop offset="0.167" stop-color="#1dbdbc"/><stop offset="0.333" stop-color="#2fc79b"/><stop offset="0.5" stop-color="#86bf64"/><stop offset="0.667" stop-color="#ddb72d"/><stop offset="0.833" stop-color="#fa9f2c"/><stop offset="1" stop-color="#f98046"/></linearGradient>
<linearGradient id="g20" gradientUnits="userSpaceOnUse" x1="102.7" y1="485.2" x2="146.5" y2="508"><stop offset="0" stop-color="#b8ba44"/><stop offset="0.167" stop-color="#c1b93e"/><stop offset="0.333" stop-color="#cab839"/><stop offset="0.5" stop-color="#d3b833"/><stop offset="0.667" stop-color="#dcb72e"/><stop offset="0.833" stop-color="#e5b628"/><stop offset="1" stop-color="#eeb522"/></linearGradient>
<linearGradient id="g21" gradientUnits="userSpaceOnUse" x1="211" y1="410" x2="102.7" y2="485.2"><stop offset="0" stop-color="#1aaae4"/><stop offset="0.167" stop-color="#1cb8c7"/><stop offset="0.333" stop-color="#1ec6aa"/><stop offset="0.5" stop-color="#69c176"/><stop offset="0.667" stop-color="#c4b93d"/><stop offset="0.833" stop-color="#fba825"/><stop offset="1" stop-color="#f98740"/></linearGradient>
<linearGradient id="g22" gradientUnits="userSpaceOnUse" x1="57" y1="406.5" x2="102.7" y2="485.2"><stop offset="0" stop-color="#90be5e"/><stop offset="0.167" stop-color="#a2bc52"/><stop offset="0.333" stop-color="#b5ba46"/><stop offset="0.5" stop-color="#c7b93b"/><stop offset="0.667" stop-color="#dab72f"/><stop offset="0.833" stop-color="#ecb523"/><stop offset="1" stop-color="#fbb31b"/></linearGradient>
<linearGradient id="g23" gradientUnits="userSpaceOnUse" x1="146.5" y1="305" x2="236.5" y2="305"><stop offset="0" stop-color="#90be5e"/><stop offset="0.167" stop-color="#61c27b"/><stop offset="0.333" stop-color="#33c698"/><stop offset="0.5" stop-color="#1dc4ad"/><stop offset="0.667" stop-color="#1dbdbc"/><stop offset="0.833" stop-color="#1cb6cb"/><stop offset="1" stop-color="#1bafda"/></linearGradient>
<linearGradient id="g24" gradientUnits="userSpaceOnUse" x1="236.5" y1="305" x2="248.3" y2="357"><stop offset="0" stop-color="#1dc4ad"/><stop offset="0.167" stop-color="#32c698"/><stop offset="0.333" stop-color="#60c27b"/><stop offset="0.5" stop-color="#8ebe5e"/><stop offset="0.667" stop-color="#bdba41"/><stop offset="0.833" stop-color="#ebb524"/><stop offset="1" stop-color="#fba923"/></linearGradient>
<linearGradient id="g25" gradientUnits="userSpaceOnUse" x1="57" y1="451.8" x2="102.7" y2="485.2"><stop offset="0" stop-color="#ebb524"/><stop offset="0.167" stop-color="#dbb72e"/><stop offset="0.333" stop-color="#ccb837"/><stop offset="0.5" stop-color="#bdba41"/><stop offset="0.667" stop-color="#aebb4a"/><stop offset="0.833" stop-color="#9fbc54"/><stop offset="1" stop-color="#90be5e"/></linearGradient>
<linearGradient id="g26" gradientUnits="userSpaceOnUse" x1="57" y1="406.5" x2="57" y2="451.8"><stop offset="0" stop-color="#90be5e"/><stop offset="0.167" stop-color="#aebb4a"/><stop offset="0.333" stop-color="#ccb837"/><stop offset="0.5" stop-color="#ebb524"/><stop offset="0.667" stop-color="#fbaf1e"/><stop offset="0.833" stop-color="#faa428"/><stop offset="1" stop-color="#fa9931"/></linearGradient>
<linearGradient id="g27" gradientUnits="userSpaceOnUse" x1="326.4" y1="305" x2="236.5" y2="305"><stop offset="0" stop-color="#1aa9e6"/><stop offset="0.167" stop-color="#1bb1d5"/><stop offset="0.333" stop-color="#1cb9c4"/><stop offset="0.5" stop-color="#1dc1b3"/><stop offset="0.667" stop-color="#26c7a0"/><stop offset="0.833" stop-color="#5bc27f"/><stop offset="1" stop-color="#90be5e"/></linearGradient>
<linearGradient id="g28" gradientUnits="userSpaceOnUse" x1="326.4" y1="305" x2="248.3" y2="357"><stop offset="0" stop-color="#1aa9e6"/><stop offset="0.167" stop-color="#1cb7c8"/><stop offset="0.333" stop-color="#1ec5ab"/><stop offset="0.5" stop-color="#69c176"/><stop offset="0.667" stop-color="#c5b93c"/><stop offset="0.833" stop-color="#faa626"/><stop offset="1" stop-color="#f98542"/></linearGradient>
<linearGradient id="g29" gradientUnits="userSpaceOnUse" x1="326.4" y1="305" x2="326.4" y2="386.2"><stop offset="0" stop-color="#1dc1b3"/><stop offset="0.167" stop-color="#26c7a0"/><stop offset="0.333" stop-color="#5bc27f"/><stop offset="0.5" stop-color="#90be5e"/><stop offset="0.667" stop-color="#c4b93c"/><stop offset="0.833" stop-color="#f9b41b"/><stop offset="1" stop-color="#faa22a"/></linearGradient>
<linearGradient id="g30" gradientUnits="userSpaceOnUse" x1="248.3" y1="357" x2="326.4" y2="386.2"><stop offset="0" stop-color="#f5b51e"/><stop offset="0.167" stop-color="#dbb72e"/><stop offset="0.333" stop-color="#c0b93f"/><stop offset="0.5" stop-color="#a6bc4f"/><stop offset="0.667" stop-color="#8cbe60"/><stop offset="0.833" stop-color="#72c070"/><stop offset="1" stop-color="#57c381"/></linearGradient>
<linearGradient id="g31" gradientUnits="userSpaceOnUse" x1="326.4" y1="386.2" x2="277.9" y2="402.4"><stop offset="0" stop-color="#1cbac3"/><stop offset="0.167" stop-color="#1dc4ad"/><stop offset="0.333" stop-color="#48c48b"/><stop offset="0.5" stop-color="#8bbe61"/><stop offset="0.667" stop-color="#cdb837"/><stop offset="0.833" stop-color="#fbac21"/><stop offset="1" stop-color="#fa9435"/></linearGradient>
<linearGradient id="g32" gradientUnits="userSpaceOnUse" x1="326.4" y1="305" x2="416" y2="305"><stop offset="0" stop-color="#90be5e"/><stop offset="0.167" stop-color="#5bc27f"/><stop offset="0.333" stop-color="#26c7a0"/><stop offset="0.5" stop-color="#1dc1b3"/><stop offset="0.667" stop-color="#1cb9c4"/><stop offset="0.833" stop-color="#1bb1d5"/><stop offset="1" stop-color="#1aa9e6"/></linearGradient>
<linearGradient id="g33" gradientUnits="userSpaceOnUse" x1="416" y1="356" x2="416" y2="305"><stop offset="0" stop-color="#90be5e"/><stop offset="0.167" stop-color="#5bc27f"/><stop offset="0.333" stop-color="#26c7a0"/><stop offset="0.5" stop-color="#1dc1b3"/><stop offset="0.667" stop-color="#1cb9c4"/><stop offset="0.833" stop-color="#1bb1d5"/><stop offset="1" stop-color="#1aa9e6"/></linearGradient>
<linearGradient id="g34" gradientUnits="userSpaceOnUse" x1="326.4" y1="305" x2="416" y2="356"><stop offset="0" stop-color="#90be5e"/><stop offset="0.167" stop-color="#86bf64"/><stop offset="0.333" stop-color="#7cbf6a"/><stop offset="0.5" stop-color="#72c070"/><stop offset="0.667" stop-color="#69c176"/><stop offset="0.833" stop-color="#5fc27c"/><stop offset="1" stop-color="#55c382"/></linearGradient>
<linearGradient id="g35" gradientUnits="userSpaceOnUse" x1="326.4" y1="386.2" x2="416" y2="356"><stop offset="0" stop-color="#f98840"/><stop offset="0.167" stop-color="#faa329"/><stop offset="0.333" stop-color="#e1b62b"/><stop offset="0.5" stop-color="#96bd59"/><stop offset="0.667" stop-color="#4cc488"/><stop offset="0.833" stop-color="#1dc4ae"/><stop offset="1" stop-color="#1cb8c6"/></linearGradient>
<linearGradient id="g36" gradientUnits="userSpaceOnUse" x1="416" y1="356" x2="353.7" y2="422.2"><stop offset="0" stop-color="#1aa9e6"/><stop offset="0.167" stop-color="#1cb8c7"/><stop offset="0.333" stop-color="#1ec7a7"/><stop offset="0.5" stop-color="#78c06d"/><stop offset="0.667" stop-color="#d9b72f"/><stop offset="0.833" stop-color="#fa9d2d"/><stop offset="1" stop-color="#f97a4b"/></linearGradient>
<linearGradient id="g37" gradientUnits="userSpaceOnUse" x1="326.4" y1="386.2" x2="353.7" y2="422.2"><stop offset="0" stop-color="#d8b730"/><stop offset="0.167" stop-color="#deb72c"/><stop offset="0.333" stop-color="#e4b628"/><stop offset="0.5" stop-color="#ebb524"/><stop offset="0.667" stop-color="#f1b520"/><stop offset="0.833" stop-color="#f7b41c"/><stop offset="1" stop-color="#fbb31b"/></linearGradient>
<linearGradient id="g38" gradientUnits="userSpaceOnUse" x1="329.1" y1="412.4" x2="353.7" y2="422.2"><stop offset="0" stop-color="#e5b628"/><stop offset="0.167" stop-color="#bfb940"/><stop offset="0.333" stop-color="#99bd57"/><stop offset="0.5" stop-color="#73c06f"/><stop offset="0.667" stop-color="#4ec487"/><stop offset="0.833" stop-color="#28c79f"/><stop offset="1" stop-color="#1dc4ae"/></linearGradient>
<linearGradient id="g39" gradientUnits="userSpaceOnUse" x1="326.4" y1="386.2" x2="329.1" y2="412.4"><stop offset="0" stop-color="#1dc2b1"/><stop offset="0.167" stop-color="#24c7a1"/><stop offset="0.333" stop-color="#4dc487"/><stop offset="0.5" stop-color="#77c06d"/><stop offset="0.667" stop-color="#a0bc53"/><stop offset="0.833" stop-color="#c9b839"/><stop offset="1" stop-color="#f3b51f"/></linearGradient>
<linearGradient id="g40" gradientUnits="userSpaceOnUse" x1="277.9" y1="402.4" x2="329.1" y2="412.4"><stop offset="0" stop-color="#d9b730"/><stop offset="0.167" stop-color="#b5ba46"/><stop offset="0.333" stop-color="#91be5d"/><stop offset="0.5" stop-color="#6dc173"/><stop offset="0.667" stop-color="#49c48a"/><stop offset="0.833" stop-color="#25c7a0"/><stop offset="1" stop-color="#1dc4ae"/></linearGradient>
<linearGradient id="g41" gradientUnits="userSpaceOnUse" x1="416" y1="356" x2="416" y2="406.5"><stop offset="0" stop-color="#1aa9e6"/><stop offset="0.167" stop-color="#1bafd9"/><stop offset="0.333" stop-color="#1cb5cc"/><stop offset="0.5" stop-color="#1cbbbf"/><stop offset="0.667" stop-color="#1dc2b2"/><stop offset="0.833" stop-color="#1ec8a5"/><stop offset="1" stop-color="#45c48d"/></linearGradient>
<linearGradient id="g42" gradientUnits="userSpaceOnUse" x1="353.7" y1="422.2" x2="416" y2="406.5"><stop offset="0" stop-color="#fa9039"/><stop offset="0.167" stop-color="#fba824"/><stop offset="0.333" stop-color="#d9b72f"/><stop offset="0.5" stop-color="#96bd5a"/><stop offset="0.667" stop-color="#53c384"/><stop offset="0.833" stop-color="#1ec6aa"/><stop offset="1" stop-color="#1cbbbf"/></linearGradient>
<linearGradient id="g43" gradientUnits="userSpaceOnUse" x1="268.5" y1="502.7" x2="329.1" y2="412.4"><stop offset="0" stop-color="#f86c57"/><stop offset="0.167" stop-color="#fa9138"/><stop offset="0.333" stop-color="#f8b41c"/><stop offset="0.5" stop-color="#93bd5b"/><stop offset="0.667" stop-color="#2ec79b"/><stop offset="0.833" stop-color="#1cbbc0"/><stop offset="1" stop-color="#1aabe1"/></linearGradient>
<linearGradient id="g44" gradientUnits="userSpaceOnUse" x1="353.7" y1="422.2" x2="326.7" y2="508"><stop offset="0" stop-color="#1cb9c4"/><stop offset="0.167" stop-color="#1ec7a7"/><stop offset="0.333" stop-color="#6ec173"/><stop offset="0.5" stop-color="#c5b93c"/><stop offset="0.667" stop-color="#fba824"/><stop offset="0.833" stop-color="#f9883f"/><stop offset="1" stop-color="#f8695a"/></linearGradient>
<linearGradient id="g45" gradientUnits="userSpaceOnUse" x1="329.1" y1="412.4" x2="326.7" y2="508"><stop offset="0" stop-color="#1dbfb8"/><stop offset="0.167" stop-color="#1ec8a6"/><stop offset="0.333" stop-color="#54c383"/><stop offset="0.5" stop-color="#8cbe60"/><stop offset="0.667" stop-color="#c4b93d"/><stop offset="0.833" stop-color="#fbb41a"/><stop offset="1" stop-color="#faa02b"/></linearGradient>
<linearGradient id="g46" gradientUnits="userSpaceOnUse" x1="268.5" y1="502.7" x2="326.7" y2="508"><stop offset="0" stop-color="#ecb523"/><stop offset="0.167" stop-color="#deb72c"/><stop offset="0.333" stop-color="#cfb835"/><stop offset="0.5" stop-color="#c1b93e"/><stop offset="0.667" stop-color="#b3bb47"/><stop offset="0.833" stop-color="#a4bc51"/><stop offset="1" stop-color="#96bd5a"/></linearGradient>
<linearGradient id="g47" gradientUnits="userSpaceOnUse" x1="416" y1="406.5" x2="416" y2="456.2"><stop offset="0" stop-color="#1aa9e6"/><stop offset="0.167" stop-color="#1bb1d5"/><stop offset="0.333" stop-color="#1cb9c4"/><stop offset="0.5" stop-color="#1dc1b3"/><stop offset="0.667" stop-color="#26c7a0"/><stop offset="0.833" stop-color="#5bc27f"/><stop offset="1" stop-color="#90be5e"/></linearGradient>
<linearGradient id="g48" gradientUnits="userSpaceOnUse" x1="353.7" y1="422.2" x2="416" y2="456.2"><stop offset="0" stop-color="#c2b93e"/><stop offset="0.167" stop-color="#aabb4d"/><stop offset="0.333" stop-color="#93bd5c"/><stop offset="0.5" stop-color="#7cc06a"/><stop offset="0.667" stop-color="#64c279"/><stop offset="0.833" stop-color="#4dc488"/><stop offset="1" stop-color="#35c696"/></linearGradient>
<linearGradient id="g49" gradientUnits="userSpaceOnUse" x1="416" y1="456.2" x2="390.4" y2="501.5"><stop offset="0" stop-color="#1bb3d0"/><stop offset="0.167" stop-color="#1dbfb8"/><stop offset="0.333" stop-color="#2ec79b"/><stop offset="0.5" stop-color="#79c06c"/><stop offset="0.667" stop-color="#c4b93c"/><stop offset="0.833" stop-color="#fbad20"/><stop offset="1" stop-color="#fa9237"/></linearGradient>
<linearGradient id="g50" gradientUnits="userSpaceOnUse" x1="353.7" y1="422.2" x2="390.4" y2="501.5"><stop offset="0" stop-color="#4dc488"/><stop offset="0.167" stop-color="#61c27b"/><stop offset="0.333" stop-color="#75c06e"/><stop offset="0.5" stop-color="#89be62"/><stop offset="0.667" stop-color="#9dbd55"/><stop offset="0.833" stop-color="#b1bb49"/><stop offset="1" stop-color="#c5b93c"/></linearGradient>
<linearGradient id="g51" gradientUnits="userSpaceOnUse" x1="326.7" y1="508" x2="390.4" y2="501.5"><stop offset="0" stop-color="#f8695a"/><stop offset="0.167" stop-color="#f98343"/><stop offset="0.333" stop-color="#fa9e2d"/><stop offset="0.5" stop-color="#efb521"/><stop offset="0.667" stop-color="#a6bc50"/><stop offset="0.833" stop-color="#5cc27e"/><stop offset="1" stop-color="#1ec6a9"/></linearGradient>
<linearGradient id="g52" gradientUnits="userSpaceOnUse" x1="416" y1="508" x2="416" y2="456.2"><stop offset="0" stop-color="#90be5e"/><stop offset="0.167" stop-color="#5bc27f"/><stop offset="0.333" stop-color="#26c7a0"/><stop offset="0.5" stop-color="#1dc1b3"/><stop offset="0.667" stop-color="#1cb9c4"/><stop offset="0.833" stop-color="#1bb1d5"/><stop offset="1" stop-color="#1aa9e6"/></linearGradient>
<linearGradient id="g53" gradientUnits="userSpaceOnUse" x1="416" y1="508" x2="390.4" y2="501.5"><stop offset="0" stop-color="#90be5e"/><stop offset="0.167" stop-color="#94bd5b"/><stop offset="0.333" stop-color="#98bd58"/><stop offset="0.5" stop-color="#9cbd56"/><stop offset="0.667" stop-color="#a1bc53"/><stop offset="0.833" stop-color="#a5bc50"/><stop offset="1" stop-color="#a9bb4e"/></linearGradient>
<linearGradient id="g54" gradientUnits="userSpaceOnUse" x1="416" y1="508" x2="326.7" y2="508"><stop offset="0" stop-color="#90be5e"/><stop offset="0.167" stop-color="#c4b93c"/><stop offset="0.333" stop-color="#f9b41b"/><stop offset="0.5" stop-color="#faa22a"/><stop offset="0.667" stop-color="#fa8f3a"/><stop offset="0.833" stop-color="#f97c4a"/><stop offset="1" stop-color="#f8695a"/></linearGradient>
<linearGradient id="g55" gradientUnits="userSpaceOnUse" x1="236" y1="508" x2="326.7" y2="508"><stop offset="0" stop-color="#f8695a"/><stop offset="0.167" stop-color="#f97c4a"/><stop offset="0.333" stop-color="#fa8f3a"/><stop offset="0.5" stop-color="#faa22a"/><stop offset="0.667" stop-color="#f9b41b"/><stop offset="0.833" stop-color="#c4b93c"/><stop offset="1" stop-color="#90be5e"/></linearGradient>
<linearGradient id="g56" gradientUnits="userSpaceOnUse" x1="57" y1="457.7" x2="102.7" y2="485.2"><stop offset="0" stop-color="#acbb4c"/><stop offset="0.167" stop-color="#9bbd56"/><stop offset="0.333" stop-color="#8abe61"/><stop offset="0.5" stop-color="#7ac06b"/><stop offset="0.667" stop-color="#69c176"/><stop offset="0.833" stop-color="#59c380"/><stop offset="1" stop-color="#48c48b"/></linearGradient>
<linearGradient id="g57" gradientUnits="userSpaceOnUse" x1="57" y1="451.8" x2="57" y2="457.7"><stop offset="0" stop-color="#90be5e"/><stop offset="0.167" stop-color="#99bd58"/><stop offset="0.333" stop-color="#a2bc52"/><stop offset="0.5" stop-color="#acbb4c"/><stop offset="0.667" stop-color="#b5ba46"/><stop offset="0.833" stop-color="#beba40"/><stop offset="1" stop-color="#c7b93a"/></linearGradient>
<linearGradient id="g58" gradientUnits="userSpaceOnUse" x1="57" y1="508" x2="146.5" y2="508"><stop offset="0" stop-color="#f8695a"/><stop offset="0.167" stop-color="#f97c4a"/><stop offset="0.333" stop-color="#fa8f3a"/><stop offset="0.5" stop-color="#faa22a"/><stop offset="0.667" stop-color="#f9b41b"/><stop offset="0.833" stop-color="#c4b93c"/><stop offset="1" stop-color="#90be5e"/></linearGradient>
<linearGradient id="g59" gradientUnits="userSpaceOnUse" x1="57" y1="508" x2="102.7" y2="485.2"><stop offset="0" stop-color="#f8695a"/><stop offset="0.167" stop-color="#f98542"/><stop offset="0.333" stop-color="#faa12a"/><stop offset="0.5" stop-color="#e1b62a"/><stop offset="0.667" stop-color="#93bd5b"/><stop offset="0.833" stop-color="#45c48c"/><stop offset="1" stop-color="#1dc2b1"/></linearGradient>
<linearGradient id="g60" gradientUnits="userSpaceOnUse" x1="57" y1="508" x2="57" y2="457.7"><stop offset="0" stop-color="#f8695a"/><stop offset="0.167" stop-color="#f97c4a"/><stop offset="0.333" stop-color="#fa8f3a"/><stop offset="0.5" stop-color="#faa22a"/><stop offset="0.667" stop-color="#f9b41b"/><stop offset="0.833" stop-color="#c4b93c"/><stop offset="1" stop-color="#90be5e"/></linearGradient>
<linearGradient id="gr" gradientUnits="userSpaceOnUse" x1="57" y1="508" x2="231.0" y2="200.4"><stop offset="0" stop-color="#f8695a"/><stop offset="0.33" stop-color="#fbb41a"/><stop offset="0.68" stop-color="#1ec8a5"/><stop offset="1" stop-color="#1aa9e6"/></linearGradient>
</defs>
<rect x="57" y="305" width="359" height="203" fill="#fff"/>
<g stroke-width="1.250" stroke-linecap="round">
<path d="M146.5 305L57 305" stroke="url(#g0)"/>
<path d="M146.5 305L87.3 337.7" stroke="url(#g1)"/>
<path d="M87.3 337.7L57 305" stroke="url(#g2)"/>
<path d="M87.3 337.7L57 356" stroke="url(#g3)"/>
<path d="M57 356L57 305" stroke="url(#g4)"/>
<path d="M146.5 305L211 410" stroke="url(#g5)"/>
<path d="M87.3 337.7L211 410" stroke="url(#g6)"/>
<path d="M57 406.5L211 410" stroke="url(#g7)"/>
<path d="M87.3 337.7L57 406.5" stroke="url(#g8)"/>
<path d="M57 356L57 406.5" stroke="url(#g9)"/>
<path d="M146.5 305L248.3 357" stroke="url(#g10)"/>
<path d="M211 410L248.3 357" stroke="url(#g11)"/>
<path d="M248.3 357L277.9 402.4" stroke="url(#g12)"/>
<path d="M211 410L277.9 402.4" stroke="url(#g13)"/>
<path d="M277.9 402.4L268.5 502.7" stroke="url(#g14)"/>
<path d="M211 410L268.5 502.7" stroke="url(#g15)"/>
<path d="M236 508L268.5 502.7" stroke="url(#g16)"/>
<path d="M211 410L236 508" stroke="url(#g17)"/>
<path d="M146.5 508L236 508" stroke="url(#g18)"/>
<path d="M211 410L146.5 508" stroke="url(#g19)"/>
<path d="M102.7 485.2L146.5 508" stroke="url(#g20)"/>
<path d="M211 410L102.7 485.2" stroke="url(#g21)"/>
<path d="M57 406.5L102.7 485.2" stroke="url(#g22)"/>
<path d="M146.5 305L236.5 305" stroke="url(#g23)"/>
<path d="M236.5 305L248.3 357" stroke="url(#g24)"/>
<path d="M57 451.8L102.7 485.2" stroke="url(#g25)"/>
<path d="M57 406.5L57 451.8" stroke="url(#g26)"/>
<path d="M326.4 305L236.5 305" stroke="url(#g27)"/>
<path d="M326.4 305L248.3 357" stroke="url(#g28)"/>
<path d="M326.4 305L326.4 386.2" stroke="url(#g29)"/>
<path d="M248.3 357L326.4 386.2" stroke="url(#g30)"/>
<path d="M326.4 386.2L277.9 402.4" stroke="url(#g31)"/>
<path d="M326.4 305L416 305" stroke="url(#g32)"/>
<path d="M416 356L416 305" stroke="url(#g33)"/>
<path d="M326.4 305L416 356" stroke="url(#g34)"/>
<path d="M326.4 386.2L416 356" stroke="url(#g35)"/>
<path d="M416 356L353.7 422.2" stroke="url(#g36)"/>
<path d="M326.4 386.2L353.7 422.2" stroke="url(#g37)"/>
<path d="M329.1 412.4L353.7 422.2" stroke="url(#g38)"/>
<path d="M326.4 386.2L329.1 412.4" stroke="url(#g39)"/>
<path d="M277.9 402.4L329.1 412.4" stroke="url(#g40)"/>
<path d="M416 356L416 406.5" stroke="url(#g41)"/>
<path d="M353.7 422.2L416 406.5" stroke="url(#g42)"/>
<path d="M268.5 502.7L329.1 412.4" stroke="url(#g43)"/>
<path d="M353.7 422.2L326.7 508" stroke="url(#g44)"/>
<path d="M329.1 412.4L326.7 508" stroke="url(#g45)"/>
<path d="M268.5 502.7L326.7 508" stroke="url(#g46)"/>
<path d="M416 406.5L416 456.2" stroke="url(#g47)"/>
<path d="M353.7 422.2L416 456.2" stroke="url(#g48)"/>
<path d="M416 456.2L390.4 501.5" stroke="url(#g49)"/>
<path d="M353.7 422.2L390.4 501.5" stroke="url(#g50)"/>
<path d="M326.7 508L390.4 501.5" stroke="url(#g51)"/>
<path d="M416 508L416 456.2" stroke="url(#g52)"/>
<path d="M416 508L390.4 501.5" stroke="url(#g53)"/>
<path d="M416 508L326.7 508" stroke="url(#g54)"/>
<path d="M236 508L326.7 508" stroke="url(#g55)"/>
<path d="M57 457.7L102.7 485.2" stroke="url(#g56)"/>
<path d="M57 451.8L57 457.7" stroke="url(#g57)"/>
<path d="M57 508L146.5 508" stroke="url(#g58)"/>
<path d="M57 508L102.7 485.2" stroke="url(#g59)"/>
<path d="M57 508L57 457.7" stroke="url(#g60)"/>
</g>
<rect x="57" y="305" width="359" height="203" stroke="url(#gr)" stroke-width="1.100"/>
<rect x="48" y="296.500" width="376.500" height="220" stroke="#9b9b9b" stroke-width="1"/>
<path d="M236.500 292v-20.500" stroke="#9b9b9b" stroke-width="1"/>
<circle cx="48" cy="296.5" r="4.300" fill="#fff" stroke="#8c8c8c" stroke-width="1.400"/>
<circle cx="236.5" cy="296.5" r="4.300" fill="#fff" stroke="#8c8c8c" stroke-width="1.400"/>
<circle cx="424.5" cy="296.5" r="4.300" fill="#fff" stroke="#8c8c8c" stroke-width="1.400"/>
<circle cx="48" cy="406.5" r="4.300" fill="#fff" stroke="#8c8c8c" stroke-width="1.400"/>
<circle cx="424.5" cy="406.5" r="4.300" fill="#fff" stroke="#8c8c8c" stroke-width="1.400"/>
<circle cx="48" cy="516.5" r="4.300" fill="#fff" stroke="#8c8c8c" stroke-width="1.400"/>
<circle cx="236.5" cy="516.5" r="4.300" fill="#fff" stroke="#8c8c8c" stroke-width="1.400"/>
<circle cx="424.5" cy="516.5" r="4.300" fill="#fff" stroke="#8c8c8c" stroke-width="1.400"/>
<path d="M239.300 267.800A7.100 7.100 0 1 1 243.400 261.400" stroke="#8c8c8c" stroke-width="4.800"/>
<path d="M239.300 260.300h12.200l-6.100 6.900z" fill="#fff" stroke="#8c8c8c" stroke-width="1.100"/>
<path d="M238.800 268A7.100 7.100 0 1 1 243.400 261.400v0.800" stroke="#fff" stroke-width="2.200"/>
<rect x="425.500" y="178" width="18" height="421" fill="#e7e7e7"/>
<rect x="43" y="178" width="2.200" height="421" fill="#e6e6e6"/>
</svg>
<!--PANEL-->
<div id="panel" class="a">
<!-- coordinates relative to panel: left=443, top=151 -->
<div class="t" style="left:13px;top:16px;font-size:21px;line-height:28px;height:28px;color:#c9471f;font-weight:300">设置形状格式</div>
<div class="a" style="left:199px;top:21px;width:0;height:0;border-left:4.500px solid transparent;border-right:4.500px solid transparent;border-top:5px solid #555"></div>
<svg width="11" height="11" viewBox="0 0 11 11" style="left:214px;top:18px" fill="none" stroke="#555" stroke-width="1.800"><path d="M1 1l9 9m0-9l-9 9"/></svg>
<div class="t" style="left:18px;top:45px;font-weight:bold;color:#d24726;font-size:12px">形状选项</div>
<div class="t" style="left:84px;top:45px;color:#333;font-size:12px">文本选项</div>
<!-- icons -->
<svg width="28" height="26" viewBox="0 0 28 26" style="left:18px;top:72px" fill="none" stroke="#d04a28" stroke-width="1.200"><path d="M2.200 13.700l8.800-7.900 9.600 8.900-8.800 8.900z" fill="#fff"/><path d="M11.700 9.800V4.300a2.200 2.200 0 0 0-4.400 0V9"/><circle cx="11.700" cy="10.300" r="1.100" fill="#d04a28" stroke="none"/><path d="M18.300 9.300c4.200 0.400 6.800 3 6.900 7.300-1.600-1-2.800-0.800-3.600 0.600l-0.700 3.800c-1.400-3-0.600-5.400-1-7.800z" fill="#d8391f" stroke="none"/></svg>
<svg width="24" height="26" viewBox="0 0 24 26" style="left:59px;top:72px" fill="#fff" stroke="#666" stroke-width="1.200"><path d="M5.500 20.500l-2 4h16l-2-4z" fill="#f2f2f2" stroke="none"/><path d="M4.500 23l1.500-3M18.500 23l-1.500-3" stroke="#999" stroke-width="0.900"/><path d="M11.900 2.700l10.300 7.100-3.900 10.200h-12.400l-3.500-10.200z"/><path d="M5.900 20h12.400" stroke-width="2.200" stroke="#5a5a5a"/></svg>
<svg width="24" height="24" viewBox="0 0 24 24" style="left:99px;top:72px" fill="none" stroke="#666" stroke-width="1.200"><path d="M3.900 9v14.500M1.500 9h4.800M1.500 23.500h4.800"/><path d="M7 4.800h14.600M7 2.500v4.600M21.600 2.500v4.600"/><rect x="7" y="9" width="14.600" height="14.600" fill="#666" stroke="none"/><path d="M14.300 11.500v9.600M9.500 16.300h9.600M12.800 13l1.500-1.500 1.500 1.500M12.800 19.600l1.500 1.500 1.500-1.500M11 14.800l-1.500 1.500 1.500 1.500M17.600 14.800l1.500 1.500-1.500 1.500" stroke="#fff" stroke-width="1"/></svg>
<svg width="212" height="10" viewBox="0 0 212 10" style="left:13px;top:106px" fill="none" stroke="#c8c8c8" stroke-width="1"><path d="M0 9.500h9l5.500-7 5.500 7h191"/></svg>
<!-- rows -->
<div class="t" style="left:21px;top:128px">预设渐变(<u>R</u>)</div>
<div class="box" style="left:159px;top:122px;width:44px;height:27px"></div>
<div class="a" style="left:169px;top:128px;width:15px;height:15px;border:1px solid #7a7a7a;background:linear-gradient(135deg,#f2f2f2,#8c8c8c)"></div>
<div class="dd" style="left:191px;top:134px;border-left-width:4.500px;border-right-width:4.500px;border-top-width:5px;border-top-color:#555;margin-left:-1px"></div>
<div class="t" style="left:21px;top:159px">类型(<u>Y</u>)</div>
<div class="box" style="left:148px;top:156px;width:55px;height:21px"></div>
<div class="t" style="left:154px;top:158px">线性</div>
<div class="dd" style="left:191px;top:165px;border-left-width:4.500px;border-right-width:4.500px;border-top-width:5px;border-top-color:#555;margin-left:-1px"></div>
<div class="t" style="left:21px;top:189px">方向(<u>D</u>)</div>
<div class="box" style="left:159px;top:183px;width:44px;height:27px"></div>
<div class="a" style="left:169px;top:189px;width:15px;height:15px;border:1px solid #7a7a7a;background:linear-gradient(135deg,#f2f2f2,#8c8c8c)"></div>
<div class="dd" style="left:191px;top:195px;border-left-width:4.500px;border-right-width:4.500px;border-top-width:5px;border-top-color:#555;margin-left:-1px"></div>
<div class="t" style="left:21px;top:219px">角度(<u>E</u>)</div>
<div class="box" style="left:100px;top:216px;width:103px;height:22px"></div>
<div class="t" style="left:108px;top:219px">315°</div>
<div class="spu" style="left:191px;top:221px"></div><div class="spd" style="left:191px;top:230px"></div>
<div class="t" style="left:21px;top:245px">渐变光圈</div>
<!-- gradient bar -->
<div class="a" style="left:34px;top:270px;width:97px;height:17px;border:1px solid #8a8a8a;background:linear-gradient(90deg,#f8695a 0,#f8695a 5%,#fb9a2a 18%,#fbb41a 34%,#9bbf4a 50%,#1ec8a5 66%,#1ebcc0 82%,#1aa9e6 94%,#1aa9e6 100%)"></div>
<svg width="110" height="34" viewBox="0 0 110 34" style="left:30px;top:266px" fill="none" stroke="#4a4a4a" stroke-width="1">
<path d="M3.2 3.500h11v18.200l-5.500 6.300-5.500-6.300z" fill="#fff"/><rect x="4.7" y="5" width="8" height="16" fill="#f8695a" stroke="none"/>
<path d="M32.9 3.500h11v18.200l-5.500 6.300-5.500-6.300z" fill="#fff"/><rect x="34.4" y="5" width="8" height="16" fill="#fbb41a" stroke="none"/>
<path d="M62.7 3.500h11v18.200l-5.500 6.300-5.500-6.300z" fill="#fff"/><rect x="64.2" y="5" width="8" height="16" fill="#1ec8a5" stroke="none"/>
<path d="M87.9 1h14v22l-7 7.500-7-7.500z" fill="#fff" stroke="#e0682e" stroke-width="1.300"/><rect x="90.4" y="4" width="9" height="17" fill="#1aa9e6" stroke="#555" stroke-width="0.900"/>
</svg>
<div class="box" style="left:143px;top:268px;width:25px;height:26px"></div>
<svg width="16" height="18" viewBox="0 0 16 18" style="left:148px;top:272px" fill="none" stroke="#555" stroke-width="1.100"><path d="M6.500 6.500h6v7l-3 3.500-3-3.500z" fill="#fff"/><path d="M9.500 8.500v4.500" stroke="#999"/><path d="M4 0.500v6M1 3.500h6" stroke="#2e9b57" stroke-width="1.600"/></svg>
<div class="box" style="left:178px;top:268px;width:25px;height:26px"></div>
<svg width="16" height="18" viewBox="0 0 16 18" style="left:183px;top:272px" fill="none" stroke="#555" stroke-width="1.100"><path d="M6.500 6.500h6v7l-3 3.500-3-3.500z" fill="#fff"/><path d="M9.500 8.500v4.500" stroke="#999"/><path d="M1 0.500l6 6m0-6l-6 6" stroke="#d63a25" stroke-width="1.600"/></svg>
<div class="t" style="left:31px;top:307px">颜色(<u>C</u>)</div>
<div class="a" style="left:159px;top:302px;width:44px;height:27px;background:#fcdfd6;border:1px solid #f3b9a7"></div>
<svg width="18" height="18" viewBox="0 0 18 18" style="left:166px;top:306px" fill="none" stroke="#555" stroke-width="1.100"><path d="M3.500 7.500l4.500-5 5.500 4.500-4.500 5z" fill="#fff"/><path d="M6.500 4.500v-4"/><path d="M14 8c1.200 1.500 1.200 3 0.300 4" stroke="#41719c" stroke-width="1.400"/><rect x="1" y="14" width="15" height="3.500" fill="#1aa9e6" stroke="none"/></svg>
<div class="dd" style="left:190px;top:314px;border-left-width:4px;border-right-width:4px;border-top-width:4px;border-top-color:#333"></div>
<div class="t" style="left:31px;top:338px">位置(<u>O</u>)</div>
<div class="box" style="left:100px;top:335px;width:103px;height:23px"></div>
<div class="t" style="left:108px;top:338px">100%</div>
<div class="spu" style="left:191px;top:340px"></div><div class="spd" style="left:191px;top:349px"></div>
<div class="t" style="left:31px;top:367px">透明度(<u>T</u>)</div>
<div class="a" style="left:93px;top:369px;width:1px;height:10px;background:#666"></div>
<div class="box" style="left:100px;top:365px;width:103px;height:22px"></div>
<div class="t" style="left:108px;top:367px">0%</div>
<div class="spu" style="left:191px;top:369px"></div><div class="spd" style="left:191px;top:378px"></div>
<div class="t" style="left:31px;top:396px">亮度(<u>I</u>)</div>
<div class="a" style="left:93px;top:398px;width:1px;height:10px;background:#666"></div>
<div class="box" style="left:100px;top:394px;width:103px;height:22px"></div>
<div class="t" style="left:108px;top:396px">0%</div>
<div class="spu" style="left:191px;top:398px"></div><div class="spd" style="left:191px;top:407px"></div>
<div class="t" style="left:21px;top:425px">宽度(<u>W</u>)</div>
<div class="box" style="left:100px;top:423px;width:103px;height:22px"></div>
<div class="t" style="left:108px;top:425px">1 磅</div>
<div class="spu" style="left:191px;top:427px"></div><div class="spd" style="left:191px;top:436px"></div>
<!-- scrollbar -->
<div class="a" style="left:208px;top:122px;width:15px;height:326px;background:#dbdbdb"></div>
<div class="box" style="left:208px;top:122px;width:15px;height:16px;border-color:#c2c2c2"></div>
<div class="spu" style="left:212px;top:127px;border-bottom-color:#555"></div>
<div class="box" style="left:208px;top:235px;width:15px;height:132px;border-color:#c2c2c2"></div>
</div>
</body>
</html>
